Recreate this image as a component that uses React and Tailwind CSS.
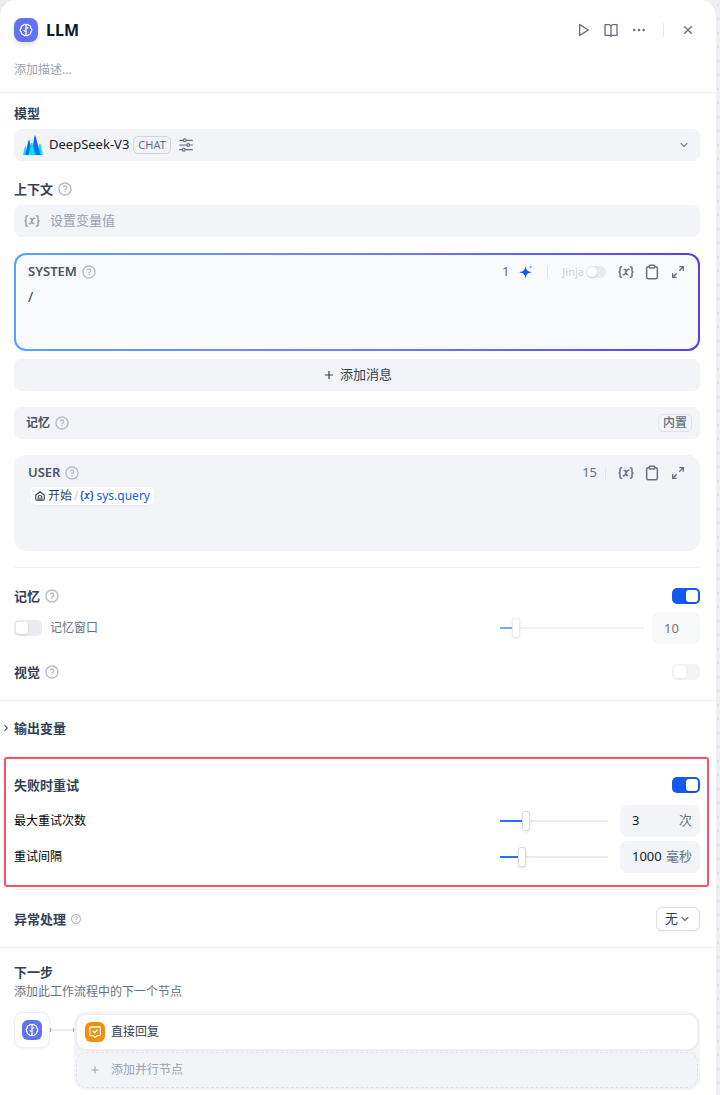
import { useState } from 'react';
import {
    RiAddLine, RiArrowDownSLine, RiArrowRightSLine, RiBookOpenLine, RiCloseLine,
    RiExpandDiagonalLine, RiMoreFill, RiPlayLargeLine, RiQuestionLine,
} from 'react-icons/ri';
import { Clipboard } from 'lucide-react';

const BrainIcon = ({ className }) => (
    <svg viewBox="0 0 14 14" fill="none" stroke="currentColor" strokeWidth="1.2" strokeLinecap="round" strokeLinejoin="round" className={className}>
        <path d="M7 1.800v10.400" />
        <path d="M7 1.800C6.400 1 4.700 1.200 4.100 2.400 2.700 2.600 2 3.800 2.200 5 .9 5.900.9 8.100 2.200 9c-.2 1.200.5 2.400 1.900 2.600.6 1.200 2.300 1.400 2.900.6" />
        <path d="M7 1.800c.6-.8 2.300-.6 2.900.6 1.400.2 2.100 1.400 1.900 2.600 1.300.9 1.300 3.100 0 4 .2 1.200-.5 2.400-1.900 2.600-.6 1.200-2.300 1.400-2.900.6" />
        <path d="M7 5.600c1 0 1.600-.4 1.900-1.200M7 8.800c-1 0-1.600-.5-1.900-1.400" />
    </svg>
);

const ModelLogo = () => (
    <svg viewBox="0 0 20 20" className="size-5">
        <path d="M0 20 1.800 12 2.600 10.600 4.400 20Z" fill="#00e5e5" />
        <path d="M2.200 20 5.200 6.400 6 4.600 6.800 6.400 9.600 20Z" fill="#006eff" />
        <path d="M13 20 16.600 9 17.400 8.600 20 20Z" fill="#00e5e5" />
        <path d="M8.600 20 11.200 2 12 0 12.800 2 17.400 20Z" fill="#006eff" />
        <path d="M5.400 20 8.200 8.600 8.800 7.400 9.400 8.600 12.600 20Z" fill="#00e5e5" />
    </svg>
);

const TuneIcon = () => (
    <svg viewBox="0 0 14 14" fill="none" stroke="currentColor" strokeWidth="1.2" strokeLinecap="round" className="size-3.5">
        <path d="M.7 2.300h3.500M7.400 2.300h5.900M.7 7h6.500M10.800 7h2.500M.7 11.700h2.500M6.400 11.700h6.900" />
        <circle cx="5.800" cy="2.300" r="1.400" />
        <circle cx="9.200" cy="7" r="1.400" />
        <circle cx="4.800" cy="11.700" r="1.400" />
    </svg>
);

const VariableIcon = ({ className }) => (
    <svg viewBox="0 0 16 14" fill="none" stroke="currentColor" strokeWidth="1.5" strokeLinecap="round" strokeLinejoin="round" className={className}>
        <path d="M3.600 1.700c-1.200 0-1.600.5-1.600 1.400v2.300C2 6.300 1.700 7 1 7c.7 0 1 .7 1 1.600v2.300c0 .9.4 1.400 1.600 1.400" />
        <path d="M12.400 1.700c1.200 0 1.600.5 1.600 1.400v2.300c0 .9.300 1.600 1 1.600-.7 0-1 .7-1 1.600v2.300c0 .9-.4 1.400-1.600 1.400" />
        <path d="M5.300 9.700c.9.200 1.400-.2 1.900-1.100L8.800 5.400c.5-.9 1-1.300 1.900-1.100M6.300 4.400c.7-.1 1.100.2 1.300.9l.9 3.400c.2.700.6 1 1.200.9" />
    </svg>
);

const HomeIcon = () => (
    <svg viewBox="0 0 10 10" fill="none" stroke="currentColor" strokeWidth="1.1" strokeLinejoin="round" className="size-2.5">
        <path d="M.8 4 5 .8 9.200 4v4.300c0 .5-.3.900-.9.900H1.700c-.6 0-.9-.4-.9-.9Z" />
        <path d="M3.200 9V6.300a1.800 1.800 0 0 1 3.600 0V9M5 6.800V9" />
    </svg>
);

const AnswerIcon = () => (
    <svg viewBox="0 0 14 14" fill="none" stroke="currentColor" strokeWidth="1.3" strokeLinecap="round" strokeLinejoin="round" className="size-3.5">
        <path d="M2.600 2h8.800c.5 0 .8.300.8.800v7c0 .5-.3.800-.8.800H9.200L7 12.400l-2.200-1.800H2.600c-.5 0-.8-.3-.8-.8v-7c0-.5.300-.8.800-.8Z" />
        <path d="m5.200 6.300 1.400 1.400 2.500-2.700" />
    </svg>
);

const SparkIcon = () => (
    <svg viewBox="0 0 14 14" className="size-3.5">
        <path d="M6.500 1c.7 4.200 1.700 5.200 6.200 6.200-4.500 1-5.500 2-6.200 6.200C5.800 9.200 4.800 8.200.3 7.200 4.800 6.200 5.800 5.200 6.500 1Z" fill="#155aef" />
        <path d="M11.800 0c.2 1.200.6 1.700 2 1.900-1.400.3-1.800.8-2 2-.2-1.200-.6-1.700-2-2C11.200 1.700 11.600 1.200 11.800 0Z" fill="#84adff" />
    </svg>
);

const Help = ({ size = 16 }) => <RiQuestionLine size={size} className="shrink-0 text-[#b4b9c4]" />;

const Title = ({ children, help, helpSize }) => (
    <h3 className="flex items-center gap-1 text-[13px] leading-5 font-semibold text-[#354052]">
        {children}
        {help && <Help size={helpSize} />}
    </h3>
);

function Switch({ label, defaultChecked = false, disabled = false }) {
    return (
        <input
            type="checkbox"
            role="switch"
            aria-label={label}
            defaultChecked={defaultChecked}
            disabled={disabled}
            className="h-4 w-7 shrink-0 appearance-none rounded-[5px] bg-[#e9ebf0] p-0.5 before:block before:h-3 before:w-3 before:rounded-[3px] before:bg-white before:shadow-sm checked:bg-[#155aef] checked:before:ml-3 disabled:opacity-50"
        />
    );
}

function Slider({ label, value, onChange, min, max, className }) {
    const percent = ((value - min) / (max - min)) * 100;
    return (
        <div className={`relative flex h-5 items-center ${className}`}>
            <div className="h-0.5 w-full bg-[#e9ebf0]">
                <div className="h-0.5 bg-[#296dff]" style={{ width: `${percent}%` }} />
            </div>
            <input
                type="range"
                aria-label={label}
                min={min}
                max={max}
                value={value}
                onChange={e => onChange(Number(e.target.value))}
                className="absolute inset-0 h-5 w-full appearance-none bg-transparent [&::-webkit-slider-thumb]:h-5 [&::-webkit-slider-thumb]:w-2 [&::-webkit-slider-thumb]:appearance-none [&::-webkit-slider-thumb]:rounded-[3px] [&::-webkit-slider-thumb]:border [&::-webkit-slider-thumb]:border-[#d9dce3] [&::-webkit-slider-thumb]:bg-white [&::-webkit-slider-thumb]:shadow-sm"
            />
        </div>
    );
}

function RetryRow({ label, unit, min, max, initial }) {
    const [value, setValue] = useState(initial);
    return (
        <div className="flex items-center">
            <span className="grow text-xs text-black">{label}</span>
            <Slider label={label} value={value} onChange={setValue} min={min} max={max} className="mr-3 w-[108px]" />
            <label className="flex h-8 w-20 items-center rounded-lg bg-[#f2f4f7] pr-2 pl-3 text-[13px]">
                <input
                    aria-label={label}
                    value={value}
                    onChange={e => setValue(Number(e.target.value) || 0)}
                    className="min-w-0 grow bg-transparent text-[#101828] outline-none"
                />
                <span className="shrink-0 text-[#676f83]">{unit}</span>
            </label>
        </div>
    );
}

const EditorActions = () => (
    <div className="flex items-center gap-2.5 text-[#676f83]">
        <button type="button" aria-label="插入变量"><VariableIcon className="h-3.5 w-4" /></button>
        <button type="button" aria-label="复制"><Clipboard size={16} strokeWidth={2.25} /></button>
        <button type="button" aria-label="展开"><RiExpandDiagonalLine size={16} /></button>
    </div>
);

export default function App() {
    const [windowSize, setWindowSize] = useState(10);

    return (
        <div className="bg-[#eceef2] bg-[radial-gradient(circle,#dcdfe6_1px,transparent_1px)] bg-[size:14px_14px] bg-[position:11px_12px] pr-1 font-['Noto_Sans','Noto_Sans_CJK_SC',sans-serif]">
            <main className="min-h-screen rounded-t-2xl bg-white pb-1">
                <header className="border-b border-[#eff0f3] pt-4 pr-5 pb-[13px] pl-3.5">
                    <div className="flex h-7 items-center">
                        <span className="flex size-6 items-center justify-center rounded-lg bg-[#6172f3] text-white shadow-md">
                            <BrainIcon className="size-3.5" />
                        </span>
                        <h1 className="ml-2 grow text-base font-bold text-[#101828]">LLM</h1>
                        <div className="flex items-center gap-3 text-[#676f83]">
                            <button type="button" aria-label="运行"><RiPlayLargeLine size={16} /></button>
                            <button type="button" aria-label="文档"><RiBookOpenLine size={16} /></button>
                            <button type="button" aria-label="更多"><RiMoreFill size={16} /></button>
                            <span className="mx-1 h-3.5 w-px bg-[#e3e5ea]" />
                            <button type="button" aria-label="关闭"><RiCloseLine size={16} /></button>
                        </div>
                    </div>
                    <input
                        aria-label="描述"
                        placeholder="添加描述..."
                        className="mt-[15px] block h-5 w-full text-xs outline-none placeholder:text-[#98a2b2]"
                    />
                </header>

                <section className="pt-2.5 pr-4 pl-3.5">
                    <Title>模型</Title>
                    <button type="button" className="mt-1.5 flex h-8 w-full items-center rounded-lg bg-[#f2f4f7] px-[9px] text-[#676f83]">
                        <ModelLogo />
                        <span className="ml-1.5 text-[13px] text-[#101828]">DeepSeek-V3</span>
                        <span className="mr-2 ml-1 flex h-[18px] items-center rounded-[5px] border border-[#cfd3db] px-1 text-[11px]">CHAT</span>
                        <TuneIcon />
                        <RiArrowDownSLine size={14} className="ml-auto" />
                    </button>

                    <div className="mt-[18px]"><Title help>上下文</Title></div>
                    <button type="button" className="mt-1.5 flex h-8 w-full items-center gap-2.5 rounded-lg bg-[#f2f4f7] px-2.5 text-[13px] text-[#98a2b2]">
                        <VariableIcon className="h-3.5 w-4" />
                        设置变量值
                    </button>

                    <div className="mt-4 rounded-xl bg-linear-to-r from-[#53a4f9] via-[#7180fa] to-[#5c3ce6] p-0.5">
                        <div className="h-[94px] rounded-[10px] bg-[#f9fafb] px-3 pt-[5px]">
                            <div className="flex h-6 items-center text-[13px] text-[#676f83]">
                                <h4 className="font-semibold text-[#495464]">SYSTEM</h4>
                                <span className="ml-1 flex grow"><Help /></span>
                                <span>1</span>
                                <button type="button" aria-label="生成提示词" className="ml-2.5"><SparkIcon /></button>
                                <span className="mx-3.5 h-3 w-px bg-[#e3e5ea]" />
                                <label className="mr-3 flex items-center gap-0.5 text-[11px] text-[#d0d3da]">
                                    Jinja
                                    <input type="checkbox" role="switch" className="h-3 w-5 appearance-none rounded-full bg-[#e9ebf0] p-px before:block before:size-2.5 before:rounded-full before:bg-white before:shadow-sm" />
                                </label>
                                <EditorActions />
                            </div>
                            <textarea aria-label="SYSTEM" defaultValue="/" className="mt-px block h-12 w-full resize-none text-sm leading-6 text-[#354052] outline-none" />
                        </div>
                    </div>

                    <button type="button" className="mt-2 flex h-8 w-full items-center justify-center gap-1 rounded-lg bg-[#f2f4f7] text-[13px] text-[#354052]">
                        <RiAddLine size={14} />
                        添加消息
                    </button>

                    <div className="mt-4 flex h-8 items-center justify-between rounded-lg bg-[#f2f4f7] pr-2 pl-3 text-xs">
                        <h4 className="flex items-center gap-1 font-semibold text-[#495464]">记忆 <Help /></h4>
                        <span className="flex h-[18px] items-center rounded-[5px] border border-[#dfe2e8] px-1 font-medium text-[#676f83]">内置</span>
                    </div>

                    <div className="mt-4 h-24 rounded-xl bg-[#f2f4f7] px-3.5 pt-1.5">
                        <div className="flex h-6 items-center text-[13px] text-[#676f83]">
                            <h4 className="font-semibold text-[#495464]">USER</h4>
                            <span className="ml-1 flex grow"><Help /></span>
                            <span>15</span>
                            <span className="mr-3 ml-2 h-3 w-px bg-[#e3e5ea]" />
                            <EditorActions />
                        </div>
                        <div className="flex h-[22px] items-center pl-0.5">
                            <span className="flex h-[18px] items-center rounded-[5px] bg-white px-1 text-xs text-[#354052] shadow-xs">
                                <span className="mx-px"><HomeIcon /></span>
                                <span className="ml-0.5">开始</span>
                                <span className="mx-0.5 text-[#c6cad2]">/</span>
                                <VariableIcon className="h-3 w-3.5 text-[#155aef]" />
                                <span className="ml-0.5 text-[#155aef]">sys.query</span>
                            </span>
                        </div>
                    </div>
                </section>

                <section className="border-b border-[#eff0f3] pt-4 pr-4 pb-[18px] pl-3.5">
                    <div className="flex items-center justify-between border-t border-[#eff0f3] pt-[18px]">
                        <Title help>记忆</Title>
                        <Switch label="记忆" defaultChecked />
                    </div>
                    <div className="mt-1.5 flex h-8 items-center">
                        <label className="flex grow items-center gap-2 text-xs text-[#676f83]">
                            <Switch label="记忆窗口" />
                            记忆窗口
                        </label>
                        <div className="flex items-center gap-2 opacity-60">
                            <Slider label="记忆窗口大小" value={windowSize} onChange={setWindowSize} min={1} max={100} className="w-36" />
                            <input
                                aria-label="记忆窗口数值"
                                value={windowSize}
                                onChange={e => setWindowSize(Number(e.target.value) || 0)}
                                className="h-8 w-12 rounded-lg bg-[#f2f4f7] pl-3 text-[13px] text-[#101828] outline-none"
                            />
                        </div>
                    </div>
                    <div className="mt-[18px] flex items-center justify-between">
                        <Title help>视觉</Title>
                        <Switch label="视觉" disabled />
                    </div>
                </section>

                <section className="border-b border-[#eff0f3] pt-[17px] pb-[18px]">
                    <button type="button" className="flex items-center text-[13px] leading-5 font-semibold text-[#354052]">
                        <RiArrowRightSLine size={12} className="mr-0.5" />
                        输出变量
                    </button>
                </section>

                <section className="relative pt-[18px] pr-4 pl-3.5">
                    <div className="pointer-events-none absolute top-0 right-[7px] bottom-0.5 left-1 rounded-[3px] border-2 border-[#fb5266]" />
                    <div className="flex items-center justify-between">
                        <Title>失败时重试</Title>
                        <Switch label="失败时重试" defaultChecked />
                    </div>
                    <div className="mt-2.5 space-y-1 pb-4">
                        <RetryRow label="最大重试次数" unit="次" min={1} max={10} initial={3} />
                        <RetryRow label="重试间隔" unit="毫秒" min={100} max={5000} initial={1000} />
                    </div>
                </section>

                <section className="border-b border-[#eff0f3] pr-4 pb-4 pl-3.5">
                    <div className="flex items-center justify-between border-t border-[#eff0f3] pt-[17px]">
                        <Title help helpSize={12}>异常处理</Title>
                        <div className="relative">
                            <select aria-label="异常处理" className="block h-6 w-11 appearance-none rounded-md border border-[#dcdfe6] bg-white pl-2 text-[13px] text-[#354052] shadow-xs">
                                <option>无</option>
                            </select>
                            <RiArrowDownSLine size={14} className="pointer-events-none absolute top-[5px] right-2 text-[#495464]" />
                        </div>
                    </div>
                </section>

                <section className="pt-3.5 pr-4 pl-3.5">
                    <Title>下一步</Title>
                    <p className="text-xs leading-5 text-[#676f83]">添加此工作流程中的下一个节点</p>
                    <div className="mt-2.5 flex">
                        <span className="flex size-9 shrink-0 items-center justify-center rounded-lg border border-[#eceef2] shadow-xs">
                            <span className="flex size-5 items-center justify-center rounded-md bg-[#6172f3] text-white">
                                <BrainIcon className="size-3.5" />
                            </span>
                        </span>
                        <span className="flex h-9 w-6 shrink-0 items-center">
                            <span className="h-1 w-px bg-[#98a2b2]" />
                            <span className="h-0.5 grow bg-[#e9ebf0]" />
                            <span className="h-1 w-px bg-[#98a2b2]" />
                        </span>
                        <div className="grow space-y-0.5 rounded-xl bg-[#f2f4f7] p-0.5 text-xs">
                            <button type="button" className="flex h-9 w-full items-center gap-1.5 rounded-[10px] border border-[#eceef2] bg-white px-2 text-[#354052] shadow-xs">
                                <span className="flex size-5 items-center justify-center rounded-md bg-[#f79009] text-white">
                                    <AnswerIcon />
                                </span>
                                直接回复
                            </button>
                            <button type="button" className="flex h-9 w-full items-center gap-1.5 rounded-[10px] border border-dashed border-[#dcdfe6] px-2 text-[#98a2b2]">
                                <span className="flex size-5 items-center justify-center"><RiAddLine size={12} /></span>
                                添加并行节点
                            </button>
                        </div>
                    </div>
                </section>
            </main>
        </div>
    );
}
